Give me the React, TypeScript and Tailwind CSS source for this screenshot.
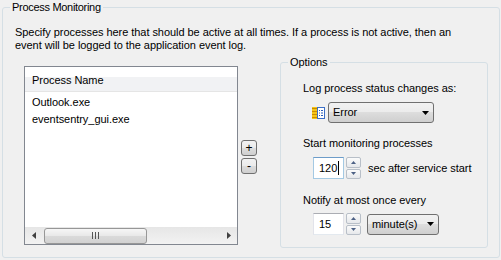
import React from 'react';

function WinButton({ label }: { label: string }) {
  return (
    <div className="flex h-[16px] w-[16px] items-center justify-center rounded-[3px] border border-[#707070] bg-[linear-gradient(#f2f2f2_0%,#ebebeb_50%,#dddddd_50%,#cfcfcf_100%)] text-[12px] leading-none">
      {label}
    </div>
  );
}

function Combo({ label, width }: { label: string; width: string }) {
  return (
    <div
      className={`flex h-[21px] items-center rounded-[3px] border border-[#707070] bg-[linear-gradient(#f2f2f2_0%,#ebebeb_50%,#dddddd_50%,#cfcfcf_100%)] pl-[4px] pr-[4px] ${width}`}
    >
      <span className="flex-1">{label}</span>
      <svg width="7" height="4" viewBox="0 0 7 4">
        <path d="M0 0H7L3.5 4Z" fill="#000" />
      </svg>
    </div>
  );
}

function Spinner() {
  return (
    <div className="flex h-[22px] w-[15px] flex-col gap-[1px]">
      <div className="flex flex-1 items-center justify-center rounded-[2px] border border-[#b8bfc8] bg-[linear-gradient(#fbfbfb,#e6e8eb)]">
        <svg width="5" height="3" viewBox="0 0 5 3">
          <path d="M0 3L2.5 0L5 3Z" fill="#4d6185" />
        </svg>
      </div>
      <div className="flex flex-1 items-center justify-center rounded-[2px] border border-[#b8bfc8] bg-[linear-gradient(#fbfbfb,#e6e8eb)]">
        <svg width="5" height="3" viewBox="0 0 5 3">
          <path d="M0 0H5L2.5 3Z" fill="#4d6185" />
        </svg>
      </div>
    </div>
  );
}

// small event-log style icon shown before the severity combo
function LogIcon() {
  return (
    <svg width="13" height="12" viewBox="0 0 13 12">
      <rect x="0" y="0" width="5" height="12" fill="#f5c518" />
      <path d="M0 1.5H5M0 4.5H5M0 7.5H5M0 10.5H5" stroke="#c98a00" />
      <rect x="5.5" y="0.5" width="7" height="11" fill="#fff" stroke="#3b6fc7" />
      <path d="M7 3.5H8M9 3.5H11M7 6H8M9 6H11M7 8.5H8M9 8.5H11" stroke="#2a5cb8" />
    </svg>
  );
}

function ScrollBar() {
  return (
    <div className="flex h-[17px] items-center bg-[linear-gradient(#e6e6e6,#f2f2f2)]">
      <div className="flex w-[17px] justify-center">
        <svg width="4" height="7" viewBox="0 0 4 7">
          <path d="M4 0V7L0 3.5Z" fill="#404040" />
        </svg>
      </div>
      <div className="ml-[2px] flex h-[16px] w-[103px] items-center justify-center rounded-[3px] border border-[#979797] bg-[linear-gradient(#f6f6f6_0%,#e8e8e8_50%,#dadada_50%,#d2d2d2_100%)]">
        <svg width="7" height="7" viewBox="0 0 7 7">
          <path d="M0.5 0V7M3.5 0V7M6.5 0V7" stroke="#555" />
        </svg>
      </div>
      <div className="flex-1" />
      <div className="flex w-[17px] justify-center">
        <svg width="4" height="7" viewBox="0 0 4 7">
          <path d="M0 0V7L4 3.5Z" fill="#404040" />
        </svg>
      </div>
    </div>
  );
}

function ProcessList() {
  const processes = ['Outlook.exe', 'eventsentry_gui.exe'];
  return (
    <div className="ml-[9px] mt-[10px] flex h-[179px] w-[214px] flex-col border border-[#828790] bg-white">
      <div className="h-[25px] border-b border-[#e5e5e5] bg-[linear-gradient(#ffffff_0%,#ffffff_40%,#f1f2f4_40%,#f1f2f4_100%)] pl-[7px] pt-[7px]">
        Process Name
      </div>
      <div className="flex-1 pt-[2px]">
        {processes.map((p) => (
          <div key={p} className="h-[17px] pl-[7px] leading-[17px]">
            {p}
          </div>
        ))}
      </div>
      <ScrollBar />
    </div>
  );
}

function OptionsGroup() {
  return (
    <fieldset className="ml-[23px] h-[192px] w-[208px] rounded-[3px] border border-[#d5dfe5]">
      <legend className="ml-[7px] px-[2px]">Options</legend>
      <div className="pl-[22px]">
        <div className="mt-[13px]">Log process status changes as:</div>
        <div className="mt-[7px] flex items-center">
          <div className="ml-[9px]">
            <LogIcon />
          </div>
          <div className="ml-[3px]">
            <Combo label="Error" width="w-[106px]" />
          </div>
        </div>
        <div className="mt-[14px]">Start monitoring processes</div>
        <div className="mt-[7px] flex items-center">
          <div className="ml-[10px] flex h-[22px] w-[31px] items-center border border-[#a4c9e3] border-t-[#6d9cc9] bg-white pl-[5px]">
            120
            <span className="ml-px h-[14px] w-px bg-black" />
          </div>
          <div className="ml-[2px]">
            <Spinner />
          </div>
          <span className="ml-[7px]">sec after service start</span>
        </div>
        <div className="mt-[15px]">Notify at most once every</div>
        <div className="mt-[6px] flex items-center">
          <div className="ml-[10px] flex h-[22px] w-[31px] items-center border border-x-[#e2e3ea] border-b-[#e3e9ef] border-t-[#abadb3] bg-white pl-[5px]">
            15
          </div>
          <div className="ml-[2px]">
            <Spinner />
          </div>
          <div className="ml-[6px]">
            <Combo label="minute(s)" width="w-[72px]" />
          </div>
        </div>
      </div>
    </fieldset>
  );
}

export default function App() {
  return (
    <div className="h-[260px] w-[501px] overflow-hidden bg-[#f0f0f0] pl-[2px] pt-px font-['Liberation_Sans',Arial,sans-serif] text-[11px] leading-[13px] tracking-[-0.05px] text-black">
      <fieldset className="h-[257px] w-[498px] rounded-[3px] border border-[#d5dfe5]">
        <legend className="ml-[7px] px-[2px] tracking-[-0.3px]">Process Monitoring</legend>
        <div className="pl-[12px]">
          <p className="mt-[12px]">
            Specify processes here that should be active at all times. If a process is not active, then an
            <br />
            event will be logged to the application event log.
          </p>
          <div className="mt-[4px] flex items-start">
            <ProcessList />
            <div className="ml-[3px] mt-[84px] flex flex-col gap-[2px]">
              <WinButton label="+" />
              <WinButton label="-" />
            </div>
            <OptionsGroup />
          </div>
        </div>
      </fieldset>
    </div>
  );
}
